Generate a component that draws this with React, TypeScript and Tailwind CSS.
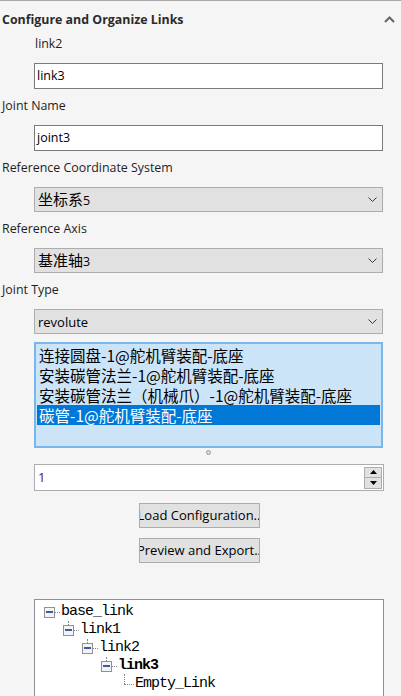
const ui = { fontFamily: '"Open Sans", "Noto Sans CJK SC", sans-serif' }
const cjk = { fontFamily: '"Noto Sans CJK SC", "Open Sans", sans-serif' }
const mono = { fontFamily: '"Liberation Mono", "DejaVu Sans Mono", monospace' }

function TextInput({ value }: { value: string }) {
  return (
    <div className="ml-[34px] mr-[18px] h-[26px] bg-white border border-[#7a7a7a] flex items-center px-[2px] text-[12.5px] text-black">
      {value}
    </div>
  )
}

function Select({ value }: { value: React.ReactNode }) {
  return (
    <div className="ml-[34px] mr-[18px] h-[25px] bg-[#e1e1e1] border border-[#adadad] flex items-center justify-between pl-[3px] pr-[5px] text-[15px] text-black">
      <span style={cjk}>{value}</span>
      <svg width="9" height="5" viewBox="0 0 9 5">
        <path d="M0.5 0.5 L4.5 4.5 L8.5 0.5" fill="none" stroke="#3a3a3a" strokeWidth="1" />
      </svg>
    </div>
  )
}

function Label({ children, indent }: { children: React.ReactNode; indent?: boolean }) {
  return (
    <div className={`${indent ? 'pl-[35px]' : 'pl-[2px]'} h-[18px] text-[12.4px] text-[#1e1e1e] leading-[18px]`}>
      {children}
    </div>
  )
}

function Minus() {
  return (
    <span className="inline-flex w-[11px] h-[11px] border border-[#919191] bg-[#f4f4f4] items-center justify-center flex-shrink-0">
      <span className="w-[7px] h-[1.5px] bg-[#3c5aa8]" />
    </span>
  )
}

function TreeRow({ level, label, bold, leaf }: { level: number; label: string; bold?: boolean; leaf?: boolean }) {
  return (
    <div className="flex items-center h-[18px]" style={{ paddingLeft: 9 + level * 19 }}>
      {leaf ? (
        <span className="w-[15px] h-[18px] relative flex-shrink-0">
          <span className="absolute left-[4px] -top-[1px] h-[10px] border-l border-dotted border-[#888]" />
          <span className="absolute left-[4px] top-[9px] w-[10px] border-t border-dotted border-[#888]" />
        </span>
      ) : (
        <>
          <span className="relative flex items-center flex-shrink-0">
            {level > 0 && <span className="absolute left-[5px] -top-[4px] h-[4px] border-l border-dotted border-[#888]" />}
            <Minus />
          </span>
          <span className="w-[5px] border-t border-dotted border-[#888] flex-shrink-0" />
          <span className="w-[1px] flex-shrink-0" />
        </>
      )}
      <span className={`text-[15px] tracking-[-1px] text-black ${bold ? 'font-bold' : ''}`} style={mono}>
        {label}
      </span>
    </div>
  )
}

function Button({ label }: { label: string }) {
  return (
    <button className="w-[121px] h-[25px] bg-[#e1e1e1] border border-[#adadad] text-[13px] text-black overflow-hidden flex items-center justify-center">
      <span className="whitespace-nowrap flex-shrink-0">{label}</span>
    </button>
  )
}

export default function App() {
  const items = [
    '连接圆盘-1@舵机臂装配-底座',
    '安装碳管法兰-1@舵机臂装配-底座',
    '安装碳管法兰（机械爪）-1@舵机臂装配-底座',
    '碳管-1@舵机臂装配-底座',
  ]
  return (
    <div className="w-[401px] h-[696px] overflow-hidden bg-[#f5f5f5] border-t border-[#a8a8a8]" style={ui}>
      {/* header */}
      <div className="flex items-center justify-between pl-[2px] pr-[6px] h-[34px] pt-[4px]">
        <span className="text-[12.4px] font-bold text-[#2b2b2b]">Configure and Organize Links</span>
        <svg width="11" height="7" viewBox="0 0 11 7" className="-mt-[2px]">
          <path d="M1 6 L5.5 1.5 L10 6" fill="none" stroke="#666" strokeWidth="2" />
        </svg>
      </div>

      <Label indent>link2</Label>
      <div className="h-[10px]" />
      <TextInput value="link3" />
      <div className="h-[8px]" />
      <Label>Joint Name</Label>
      <div className="h-[10px]" />
      <TextInput value="joint3" />
      <div className="h-[8px]" />
      <Label>Reference Coordinate System</Label>
      <div className="h-[10px]" />
      <Select value={<>坐标系<span className="text-[12.5px]" style={ui}>5</span></>} />
      <div className="h-[8px]" />
      <Label>Reference Axis</Label>
      <div className="h-[10px]" />
      <Select value={<>基准轴<span className="text-[12.5px]" style={ui}>3</span></>} />
      <div className="h-[8px]" />
      <Label>Joint Type</Label>
      <div className="h-[10px]" />
      <Select value={<span className="text-[13px]" style={ui}>revolute</span>} />
      <div className="h-[8px]" />

      {/* list */}
      <div className="ml-[34px] mr-[18px] h-[106px] bg-[#cce4f7] border-2 border-[#7ab6ea] pt-[1px] px-[1px]" style={cjk}>
        {items.map((t, i) => (
          <div
            key={t}
            className={`h-[20px] leading-[20px] pl-[2px] text-[15.5px] whitespace-nowrap ${i === 3 ? 'bg-[#0078d7] text-white' : 'text-black'}`}
          >
            {t}
          </div>
        ))}
      </div>
      <div className="ml-[34px] mr-[18px] flex justify-center h-[16px] pt-[2px]">
        <span className="w-[5px] h-[5px] rounded-full border border-[#999] bg-[#ddd]" />
      </div>

      {/* spinner */}
      <div className="ml-[34px] mr-[17px] h-[27px] bg-white border border-[#adadad] flex items-center justify-between pl-[3px] pr-[1px]">
        <span className="text-[13px] text-[#4b0f52]">1</span>
        <div className="flex flex-col">
          <div className="w-[18px] h-[11px] bg-[#e1e1e1] border border-[#adadad] flex items-center justify-center">
            <svg width="7" height="4" viewBox="0 0 7 4"><path d="M0 4 L3.5 0 L7 4 Z" fill="#000" /></svg>
          </div>
          <div className="w-[18px] h-[11px] bg-[#e1e1e1] border border-[#adadad] border-t-0 flex items-center justify-center">
            <svg width="7" height="4" viewBox="0 0 7 4"><path d="M0 0 L3.5 4 L7 0 Z" fill="#000" /></svg>
          </div>
        </div>
      </div>

      <div className="flex flex-col items-center gap-[10px] mt-[12px] pr-[3px]">
        <Button label="Load Configuration.." />
        <Button label="Preview and Export.." />
      </div>

      {/* tree */}
      <div className="ml-[34px] mr-[17px] mt-[36px] h-[120px] bg-white border border-[#8f8f95] pt-[3px]">
        <TreeRow level={0} label="base_link" />
        <TreeRow level={1} label="link1" />
        <TreeRow level={2} label="link2" />
        <TreeRow level={3} label="link3" bold />
        <TreeRow level={4} label="Empty_Link" leaf />
      </div>
    </div>
  )
}
